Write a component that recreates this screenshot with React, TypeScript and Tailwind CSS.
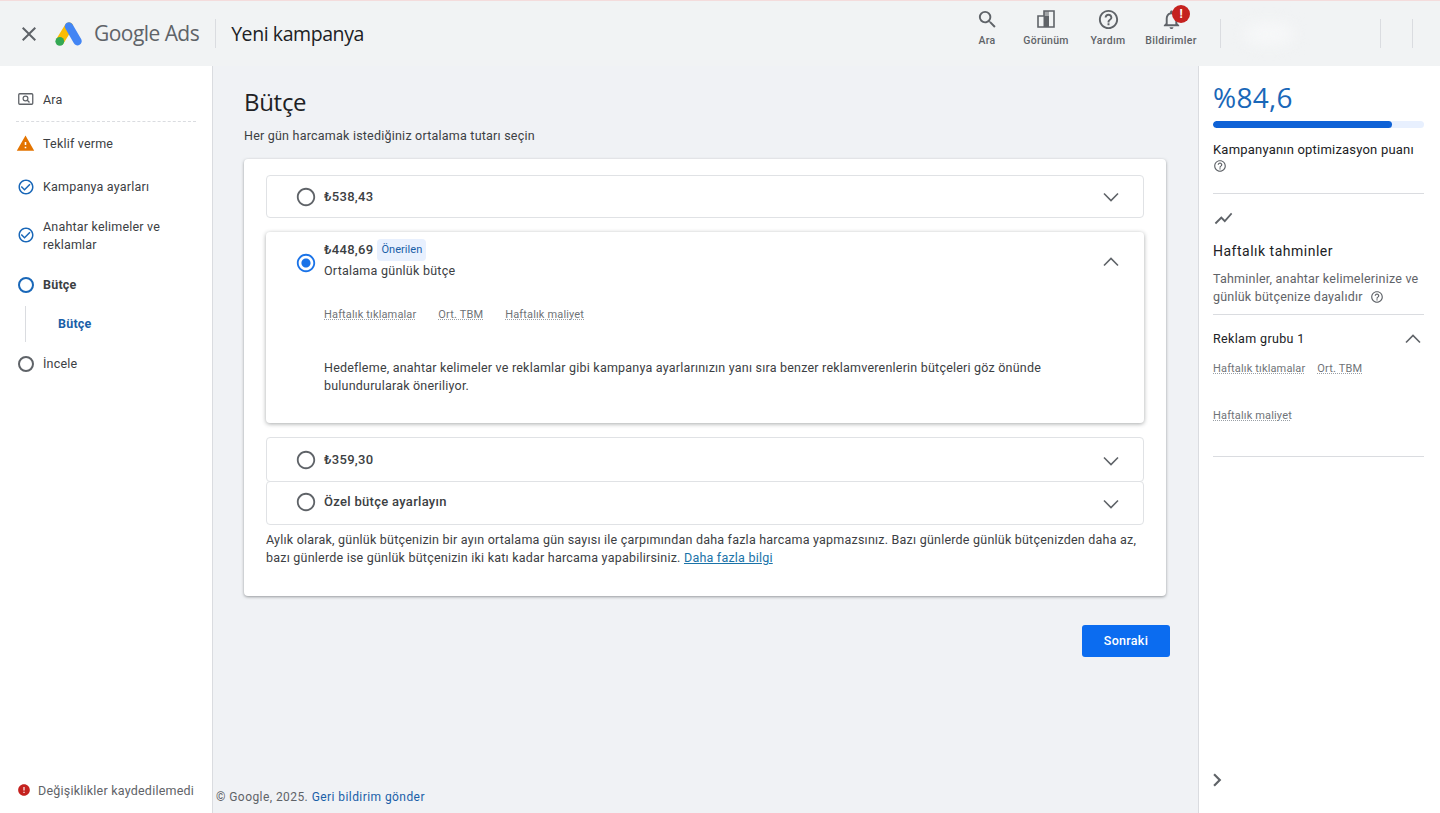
import React from "react";
import {
  MdClose, MdSearch, MdHelpOutline, MdNotificationsNone,
  MdCheckCircleOutline, MdWarning, MdError, MdShowChart, MdChevronRight,
  MdRadioButtonUnchecked, MdRadioButtonChecked,
} from "react-icons/md";

function AdsLogo() {
  return (
    <svg width="29" height="26" viewBox="0 0 29 26" className="shrink-0">
      <line x1="6.2" y1="19.8" x2="15" y2="5.5" stroke="#fbbc04" strokeWidth="8.4" strokeLinecap="round" />
      <line x1="15" y1="5.5" x2="23.5" y2="20.2" stroke="#4285f4" strokeWidth="8.4" strokeLinecap="round" />
      <circle cx="5.8" cy="20.3" r="4.4" fill="#34a853" />
    </svg>
  );
}

function ViewIcon() {
  return (
    <svg width="20" height="20" viewBox="0 0 20 20" fill="none">
      <path d="M8 2h10v16H2V7h6z" stroke="#5f6368" strokeWidth="1.6" />
      <rect x="7.5" y="7" width="5.5" height="11" fill="#5f6368" />
      <rect x="8" y="2" width="5" height="5" fill="#5f6368" opacity="0.55" />
    </svg>
  );
}

function SearchBoxIcon() {
  return (
    <svg width="16" height="14" viewBox="0 0 16 14" fill="none">
      <rect x="0.75" y="0.75" width="14" height="10.5" rx="1" stroke="#5f6368" strokeWidth="1.3" />
      <circle cx="7.5" cy="5.5" r="2.4" stroke="#5f6368" strokeWidth="1.2" />
      <path d="M9.3 7.3l2.2 2.2" stroke="#5f6368" strokeWidth="1.3" />
    </svg>
  );
}

function Chevron({ up, className }: { up?: boolean; className?: string }) {
  return (
    <svg width="16" height="10" viewBox="0 0 16 10" fill="none" className={className}>
      <path d={up ? "M1 8.5l7-7 7 7" : "M1 1.5l7 7 7-7"} stroke="#5f6368" strokeWidth="1.6" />
    </svg>
  );
}

function TopAction({ icon, label, width }: { icon: React.ReactNode; label: string; width: string }) {
  return (
    <div className={`flex flex-col items-center relative ${width}`}>
      <div className="h-6 flex items-center justify-center">{icon}</div>
      <span className="text-[10.5px] font-medium text-[#5f6368] tracking-[0.3px] leading-[14px] mt-[3px] whitespace-nowrap">{label}</span>
    </div>
  );
}

function Dash({ children }: { children: React.ReactNode }) {
  return (
    <span className="text-[11px] tracking-[0.15px] text-[#6f7377] underline decoration-dotted underline-offset-[1px] decoration-[#9aa0a6] whitespace-nowrap">
      {children}
    </span>
  );
}

function Radio({ on }: { on?: boolean }) {
  return on ? (
    <MdRadioButtonChecked className="text-[#1a73e8] shrink-0" size={22} />
  ) : (
    <MdRadioButtonUnchecked className="text-[#5f6368] shrink-0" size={22} />
  );
}

function CollapsedRow({ label, h, shift }: { label: string; h: string; shift?: string }) {
  return (
    <div className={`${h} rounded bg-white border border-[#e0e2e5] flex items-center pl-[28px] pr-[24px]`}>
      <Radio />
      <span className="ml-[7px] text-[13px] font-medium tracking-[0.3px] text-[#3c4043]">{label}</span>
      <Chevron className={`ml-auto ${shift ?? ""}`} />
    </div>
  );
}

function Step({ icon, children, bold, mt, iconClass }: { icon: React.ReactNode; children: React.ReactNode; bold?: boolean; mt: string; iconClass?: string }) {
  return (
    <div className={`flex items-center pl-4 ${mt}`}>
      <div className={`w-[19px] flex justify-center shrink-0 ${iconClass ?? ""}`}>{icon}</div>
      <div className={`ml-2 text-[12.5px] leading-[18px] tracking-[0.2px] text-[#3c4043] ${bold ? "font-bold" : ""}`}>{children}</div>
    </div>
  );
}

export default function App() {
  return (
    <div className="h-[813px] w-[1440px] flex flex-col overflow-hidden bg-[#f0f2f5] font-['Roboto',sans-serif]">
      <header className="h-[66px] shrink-0 flex items-center border-t border-[#f4dcdc] bg-[#f1f3f4]">
        <MdClose className="ml-[17px] text-[#5f6368]" size={24} />
        <div className="ml-[13px]"><AdsLogo /></div>
        <span className="ml-[11px] text-[21px] text-[#5f6368] font-['Open_Sans',sans-serif] tracking-[-0.55px] whitespace-nowrap">Google Ads</span>
        <div className="ml-[16px] w-px h-[29px] bg-[#dadce0]" />
        <span className="ml-[15px] text-[19.5px] text-[#202124] font-['Open_Sans',sans-serif] tracking-[-0.42px] whitespace-nowrap">Yeni kampanya</span>
        <div className="ml-auto flex items-center">
          <div className="flex items-center -mt-[12px]">
            <TopAction width="w-[40px]" label="Ara" icon={<MdSearch className="text-[#5f6368]" size={23} />} />
            <TopAction width="w-[60px] ml-[9px]" label="Görünüm" icon={<ViewIcon />} />
            <TopAction width="w-[44px] ml-[10px]" label="Yardım" icon={<MdHelpOutline className="text-[#5f6368]" size={23} />} />
            <TopAction
              width="w-[60px] ml-[11px]"
              label="Bildirimler"
              icon={
                <>
                  <MdNotificationsNone className="text-[#5f6368]" size={23} />
                  <span className="absolute left-[31px] -top-[2px] w-[18px] h-[18px] rounded-full bg-[#c5221f] text-white text-[12px] font-bold flex items-center justify-center">!</span>
                </>
              }
            />
          </div>
          <div className="ml-[19px] w-px h-[29px] bg-[#dadce0]" />
          <div className="w-[159px] h-[29px] flex items-center pl-6">
            <div className="w-12 h-5 rounded-full bg-[#f7f8f9] blur-sm" />
          </div>
          <div className="w-px h-[29px] bg-[#dadce0]" />
          <div className="w-[31px] h-[29px]" />
          <div className="w-px h-[29px] bg-[#dadce0]" />
          <div className="w-[27px]" />
        </div>
      </header>

      <div className="flex-1 flex min-h-0">
        <aside className="w-[213px] shrink-0 bg-white border-r border-[#dadce0] flex flex-col pt-[25px] pb-[12px]">
          <Step mt="" icon={<SearchBoxIcon />}>Ara</Step>
          <div className="mt-[12px] mx-4 border-t border-dashed border-[#dadce0]" />
          <Step mt="mt-[12px]" icon={<MdWarning className="text-[#e37400]" size={19} />}>Teklif verme</Step>
          <Step mt="mt-[25px]" icon={<MdCheckCircleOutline className="text-[#1967b8]" size={18} />}>Kampanya ayarları</Step>
          <Step mt="mt-[22px]" iconClass="-mt-[3px]" icon={<MdCheckCircleOutline className="text-[#1967b8]" size={18} />}>Anahtar kelimeler ve<br />reklamlar</Step>
          <Step mt="mt-[22px]" bold icon={<span className="block w-4 h-4 rounded-full border-2 border-[#1967b8]" />}>Bütçe</Step>
          <div className="ml-[25px] mt-[12px] h-[36px] border-l border-[#dadce0] pl-[32px] flex items-center">
            <span className="text-[12.5px] font-bold tracking-[0.2px] text-[#1a5fa8]">Bütçe</span>
          </div>
          <Step mt="mt-[13px]" icon={<span className="block w-4 h-4 rounded-full border-2 border-[#5f6368]" />}>İncele</Step>
          <div className="mt-auto flex items-center pl-[17px]">
            <MdError className="text-[#c5221f] -mt-[3px]" size={14} />
            <span className="ml-[7px] text-[12.5px] tracking-[0.22px] text-[#5f6368] whitespace-nowrap">Değişiklikler kaydedilemedi</span>
          </div>
        </aside>

        <main className="w-[985px] shrink-0 flex flex-col">
          <div className="pl-[31px] pt-[21px]">
            <h1 className="text-[24px] leading-[30px] text-[#202124] font-['Open_Sans',sans-serif] tracking-[-0.3px]">Bütçe</h1>
            <p className="mt-[10px] text-[12.5px] leading-[18px] tracking-[0.22px] text-[#3c4043]">Her gün harcamak istediğiniz ortalama tutarı seçin</p>
            <section className="mt-[14px] w-[922px] h-[437px] bg-white rounded shadow-[0_1px_3px_rgba(60,64,67,0.5)] px-[22px] pt-[16px]">
              <CollapsedRow h="h-[43px]" label="₺538,43" />
              <div className="mt-[14px] h-[191px] rounded bg-white shadow-[0_1px_4px_rgba(60,64,67,0.45)] pl-[29px] pr-[25px] pt-[7px] relative">
                <div className="flex items-start">
                  <div className="mt-[13px]"><Radio on /></div>
                  <div className="ml-[7px]">
                    <div className="flex items-center">
                      <span className="text-[13px] font-medium tracking-[0.3px] text-[#3c4043]">₺448,69</span>
                      <span className="ml-[4px] h-[22px] px-1 flex items-center bg-[#e8f0fe] rounded-sm text-[11px] tracking-[0.05px] text-[#1a5fa8]">Önerilen</span>
                    </div>
                    <div className="text-[12.5px] leading-[18px] tracking-[0.25px] text-[#3c4043] mt-[1px]">Ortalama günlük bütçe</div>
                  </div>
                  <Chevron up className="ml-auto mt-[18px]" />
                </div>
                <div className="ml-[29px] mt-[27px] flex gap-[22px] leading-[15px]">
                  <Dash>Haftalık tıklamalar</Dash>
                  <Dash>Ort. TBM</Dash>
                  <Dash>Haftalık maliyet</Dash>
                </div>
                <p className="ml-[29px] mt-[37px] w-[760px] text-[12.5px] leading-[18px] tracking-[0.21px] text-[#3c4043]">
                  Hedefleme, anahtar kelimeler ve reklamlar gibi kampanya ayarlarınızın yanı sıra benzer reklamverenlerin bütçeleri göz önünde bulundurularak öneriliyor.
                </p>
              </div>
              <CollapsedRow h="h-[45px] mt-[14px]" label="₺359,30" shift="mt-[2px]" />
              <CollapsedRow h="h-[44px] -mt-px pb-[2px]" label="Özel bütçe ayarlayın" shift="mt-[4px]" />
              <p className="mt-[6px] text-[12.5px] leading-[18px] tracking-[0.22px] text-[#3c4043]">
                Aylık olarak, günlük bütçenizin bir ayın ortalama gün sayısı ile çarpımından daha fazla harcama yapmazsınız. Bazı günlerde günlük bütçenizden daha az,<br />
                bazı günlerde ise günlük bütçenizin iki katı kadar harcama yapabilirsiniz. <span className="text-[#1a73a8] underline">Daha fazla bilgi</span>
              </p>
            </section>
            <div className="w-[926px] mt-[29px] flex justify-end">
              <button className="w-[88px] h-8 rounded-[3px] bg-[#0b6cf0] text-white text-[12.5px] font-medium tracking-[0.3px]">Sonraki</button>
            </div>
          </div>
          <div className="mt-auto pl-[3px] pb-[8px] text-[12px] leading-4 tracking-[0.43px] text-[#5f6368]">
            © Google, 2025. <span className="text-[#1a5fa8]">Geri bildirim gönder</span>
          </div>
        </main>

        <aside className="flex-1 bg-white border-l border-[#dadce0] pl-[14px] pr-[16px] flex flex-col">
          <div className="pt-[13px] text-[28px] leading-[36px] tracking-[0.3px] text-[#1967b8] font-['Open_Sans',sans-serif]">%84,6</div>
          <div className="mt-[6px] h-[7px] rounded-full bg-[#e8f0fe] overflow-hidden">
            <div className="h-full w-[85%] rounded-full bg-[#0f62d6]" />
          </div>
          <div className="mt-[14px] text-[13px] leading-[16px] tracking-[0.2px] text-[#202124] whitespace-nowrap">Kampanyanın optimizasyon puanı</div>
          <MdHelpOutline className="text-[#5f6368] mt-[1px]" size={14} />
          <div className="mt-[20px] border-t border-[#dadce0]" />
          <MdShowChart className="mt-[14px] text-[#5f6368]" size={21} />
          <div className="mt-[12px] text-[14px] leading-[20px] tracking-[0.5px] text-[#202124]">Haftalık tahminler</div>
          <div className="mt-[9px] text-[12.5px] leading-[18px] tracking-[0.22px] text-[#5f6368]">
            Tahminler, anahtar kelimelerinize ve<br />
            <span className="inline-flex items-center">günlük bütçenize dayalıdır<MdHelpOutline className="ml-[7px]" size={14} /></span>
          </div>
          <div className="mt-[8px] border-t border-[#dadce0]" />
          <div className="mt-[14px] flex items-center justify-between h-[20px]">
            <span className="text-[12.5px] tracking-[0.35px] text-[#202124]">Reklam grubu 1</span>
            <Chevron up className="mr-[3px]" />
          </div>
          <div className="mt-[12px] flex gap-[12px] leading-[15px]">
            <Dash>Haftalık tıklamalar</Dash>
            <Dash>Ort. TBM</Dash>
          </div>
          <div className="mt-[30px] leading-[15px]"><Dash>Haftalık maliyet</Dash></div>
          <div className="mt-[33px] border-t border-[#dadce0]" />
          <MdChevronRight className="mt-auto mb-[20px] -ml-[9px] text-[#5f6368]" size={26} />
        </aside>
      </div>
    </div>
  );
}
